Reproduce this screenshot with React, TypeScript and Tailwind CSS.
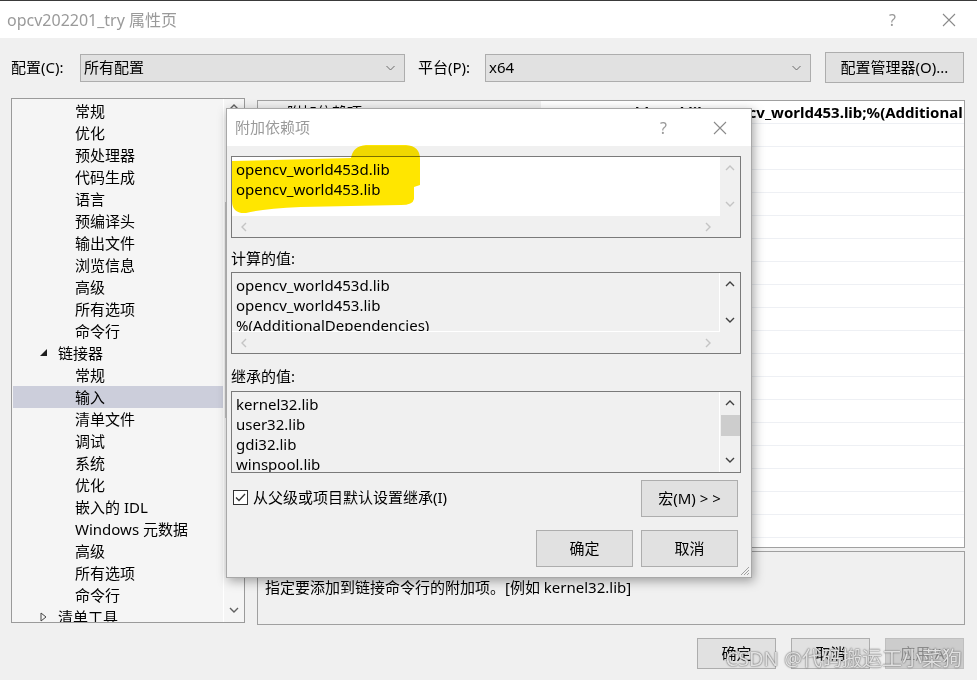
import React from "react";

const font = "font-['Noto_Sans','Noto_Sans_CJK_SC',sans-serif]";

type Dir = "up" | "down" | "left" | "right";

function Chevron({ dir, color = "#606060" }: { dir: Dir; color?: string }) {
  const vertical = dir === "up" || dir === "down";
  const pts = {
    up: "1,6 5,2 9,6",
    down: "1,2 5,6 9,2",
    left: "6,1 2,5 6,9",
    right: "2,1 6,5 2,9",
  }[dir];
  return (
    <svg
      width={vertical ? 10 : 8}
      height={vertical ? 8 : 10}
      viewBox={vertical ? "0 0 10 8" : "0 0 8 10"}
    >
      <polyline points={pts} fill="none" stroke={color} strokeWidth="1.4" />
    </svg>
  );
}

const light = "#c4c4c4";

interface EditBoxProps {
  lines: string[];
  white?: boolean;
  vColor: string;
  hScroll?: boolean;
  thumb?: boolean;
}

function EditBox(props: EditBoxProps) {
  const { lines, white = false, vColor, hScroll = true, thumb = false } = props;
  return (
    <div className="flex flex-col h-[82px] border border-[#7a7a7a] bg-[#f0f0f0]">
      <div className="flex flex-1 min-h-0">
        <div
          className={
            white
              ? "flex-1 overflow-hidden bg-white px-[4px] pt-[2px] text-[15px] leading-[20px]"
              : hScroll
              ? "flex-1 overflow-hidden border-r border-b border-white px-[4px] pt-[2px] text-[15px] leading-[20px]"
              : "flex-1 overflow-hidden border-r border-white px-[4px] pt-[2px] text-[15px] leading-[20px]"
          }
        >
          {lines.map((l) => (
            <div key={l} className="whitespace-nowrap">
              {l}
            </div>
          ))}
        </div>
        <div className="w-[20px] flex flex-col items-center">
          <div className="h-[22px] flex items-center justify-center">
            <Chevron dir="up" color={vColor} />
          </div>
          {thumb && <div className="mt-[1px] h-[21px] w-[19px] bg-[#cdcdcd]" />}
          <div className="flex-1" />
          <div className="h-[24px] flex items-center justify-center">
            <Chevron dir="down" color={vColor} />
          </div>
        </div>
      </div>
      {hScroll && (
        <div className="h-[21px] flex">
          <div className="flex-1 flex items-center justify-between pl-[8px] pr-[8px]">
            <Chevron dir="left" color={light} />
            <Chevron dir="right" color={light} />
          </div>
          <div className="w-[20px]" />
        </div>
      )}
    </div>
  );
}

interface TreeItem {
  label: string;
  indent: "child" | "parent";
  icon?: "open" | "closed";
  selected?: boolean;
}

const treeItems: TreeItem[] = [
  { label: "常规", indent: "child" },
  { label: "优化", indent: "child" },
  { label: "预处理器", indent: "child" },
  { label: "代码生成", indent: "child" },
  { label: "语言", indent: "child" },
  { label: "预编译头", indent: "child" },
  { label: "输出文件", indent: "child" },
  { label: "浏览信息", indent: "child" },
  { label: "高级", indent: "child" },
  { label: "所有选项", indent: "child" },
  { label: "命令行", indent: "child" },
  { label: "链接器", indent: "parent", icon: "open" },
  { label: "常规", indent: "child" },
  { label: "输入", indent: "child", selected: true },
  { label: "清单文件", indent: "child" },
  { label: "调试", indent: "child" },
  { label: "系统", indent: "child" },
  { label: "优化", indent: "child" },
  { label: "嵌入的 IDL", indent: "child" },
  { label: "Windows 元数据", indent: "child" },
  { label: "高级", indent: "child" },
  { label: "所有选项", indent: "child" },
  { label: "命令行", indent: "child" },
  { label: "清单工具", indent: "parent", icon: "closed" },
];

function Button({ label, disabled = false, w = "w-[79px]", h = "h-[31px]" }: { label: string; disabled?: boolean; w?: string; h?: string }) {
  return (
    <div
      className={
        disabled
          ? `${w} ${h} flex items-center justify-center border border-[#bfbfbf] bg-[#cccccc] text-[15px] text-[#8a8a8a]`
          : `${w} ${h} flex items-center justify-center border border-[#adadad] bg-[#e1e1e1] text-[15px] text-black`
      }
    >
      {label}
    </div>
  );
}

function Combo({ text, w }: { text: string; w: string }) {
  return (
    <div className={`${w} h-[28px] flex items-center justify-between border border-[#adadad] bg-[#e1e1e1] pl-[3px] pr-[9px] text-[15px]`}>
      <span>{text}</span>
      <svg width="9" height="6" viewBox="0 0 9 6">
        <polyline points="0.5,1 4.5,5 8.5,1" fill="none" stroke="#6a6a6a" strokeWidth="1" />
      </svg>
    </div>
  );
}

function CloseX({ color }: { color: string }) {
  return (
    <svg width="14" height="14" viewBox="0 0 14 14">
      <path d="M1 1 L13 13 M13 1 L1 13" stroke={color} strokeWidth="1.1" />
    </svg>
  );
}

export default function App() {
  return (
    <div className={`${font} relative w-[977px] h-[680px] overflow-hidden bg-[#f0f0f0] text-black`}>
      <div className="h-px bg-[#3a3a3a]" />
      {/* Window title */}
      <div className="h-[37px] bg-white flex items-center pl-[7px]">
        <span className="text-[16px] text-[#9a9a9a]">opcv202201_try 属性页</span>
        <div className="flex-1" />
        <span className="text-[16px] text-[#9a9a9a] mr-[46px]">?</span>
        <div className="mr-[21px]">
          <CloseX color="#8a8a8a" />
        </div>
      </div>
      {/* Config row */}
      <div className="mt-[14px] h-[31px] flex items-center pl-[11px] text-[15px]">
        <span className="w-[69px]">配置(C):</span>
        <Combo text="所有配置" w="w-[325px]" />
        <span className="ml-[13px] w-[67px]">平台(P):</span>
        <Combo text="x64" w="w-[326px]" />
        <div className="ml-[14px]">
          <Button label="配置管理器(O)..." w="w-[139px]" h="h-[31px]" />
        </div>
      </div>
      {/* Content */}
      <div className="mt-[15px] flex pl-[11px] pr-[12px] gap-[12px] text-[15px]">
        {/* Tree */}
        <div className="w-[234px] shrink-0 h-[525px] border border-[#9a9a9a] bg-[#f5f5f5] flex">
          <div className="flex-1 overflow-hidden pt-[1px] pl-[1px]">
            {treeItems.map((it, i) => (
              <div
                key={i}
                className={
                  it.selected
                    ? "h-[22px] flex items-center bg-[#cccedb] whitespace-nowrap"
                    : "h-[22px] flex items-center whitespace-nowrap"
                }
              >
                {it.indent === "child" ? (
                  <span className="pl-[62px]">{it.label}</span>
                ) : (
                  <>
                    <span className="w-[45px] pl-[27px] flex items-center">
                      {it.icon === "open" ? (
                        <svg width="8" height="8" viewBox="0 0 8 8">
                          <polygon points="7,0 7,7 0,7" fill="#1e1e1e" />
                        </svg>
                      ) : (
                        <svg width="8" height="10" viewBox="0 0 8 10">
                          <polygon points="1,1 6,5 1,9" fill="none" stroke="#444444" strokeWidth="1" />
                        </svg>
                      )}
                    </span>
                    <span>{it.label}</span>
                  </>
                )}
              </div>
            ))}
          </div>
          <div className="w-[21px] flex flex-col items-center border-l border-white">
            <div className="h-[12px] flex items-end">
              <Chevron dir="up" color="#606060" />
            </div>
            <div className="mt-[91px] h-[216px] w-[19px] bg-[#c2c2c2]" />
            <div className="flex-1" />
            <div className="h-[24px] flex items-center">
              <Chevron dir="down" color="#606060" />
            </div>
          </div>
        </div>
        {/* Right column */}
        <div className="flex-1 min-w-0 flex flex-col mt-[2px]">
          <div className="h-[448px] border border-[#a0a0a0] bg-white overflow-hidden">
            {Array.from({ length: 20 }).map((_, i) => (
              <div key={i} className="h-[23px] flex border-b border-[#eef0f4]">
                {i === 0 ? (
                  <>
                    <div className="w-[283px] shrink-0 bg-[#f0f0f0] pl-[29px] leading-[22px] whitespace-nowrap">附加依赖项</div>
                    <div className="flex-1 min-w-0 overflow-hidden pl-[5px] leading-[22px] font-bold whitespace-nowrap">
                      opencv_world453d.lib;opencv_world453.lib;%(AdditionalDependencies)
                    </div>
                  </>
                ) : null}
              </div>
            ))}
          </div>
          <div className="mt-[3px] h-[74px] border border-[#a0a0a0] px-[7px] pt-[2px] leading-[22px]">
            <div className="font-bold">附加依赖项</div>
            <div>指定要添加到链接命令行的附加项。[例如 kernel32.lib]</div>
          </div>
        </div>
      </div>
      {/* Bottom buttons */}
      <div className="mt-[13px] flex justify-end gap-[15px] pr-[13px]">
        <Button label="确定" />
        <Button label="取消" />
        <Button label="应用(A)" disabled />
      </div>

      {/* Dialog window */}
      <div className="absolute left-[226px] top-[108px] w-[526px] h-[470px] border border-[#a8a8a8] bg-[#f0f0f0] shadow-[2px_3px_10px_rgba(0,0,0,0.35)] flex flex-col text-[15px]">
        <div className="h-[37px] bg-white flex items-center pl-[8px] shrink-0">
          <span className="text-[#9a9a9a]">附加依赖项</span>
          <div className="flex-1" />
          <span className="text-[16px] text-[#9a9a9a] mr-[46px]">?</span>
          <div className="mr-[24px]">
            <CloseX color="#8a8a8a" />
          </div>
        </div>
        <div className="flex flex-col pl-[4px] pr-[10px]">
          <div className="mt-[10px]">
            <EditBox lines={["opencv_world453d.lib", "opencv_world453.lib"]} white vColor={light} />
          </div>
          <div className="h-[34px] pt-[10px] leading-[20px]">计算的值:</div>
          <EditBox
            lines={["opencv_world453d.lib", "opencv_world453.lib", "%(AdditionalDependencies)"]}
            vColor="#404040"
          />
          <div className="h-[37px] pt-[12px] leading-[20px]">继承的值:</div>
          <EditBox
            lines={["kernel32.lib", "user32.lib", "gdi32.lib", "winspool.lib", "comdlg32.lib"]}
            vColor="#404040"
            hScroll={false}
            thumb
          />
          <div className="mt-[7px] flex items-start justify-between pr-[3px]">
            <div className="mt-[7px] flex items-center pl-[2px]">
              <div className="w-[15px] h-[15px] border border-[#333333] bg-white flex items-center justify-center">
                <svg width="11" height="9" viewBox="0 0 11 9">
                  <polyline points="1,4.5 4,7.5 10,1" fill="none" stroke="#333333" strokeWidth="1.3" />
                </svg>
              </div>
              <span className="ml-[5px] leading-[20px]">从父级或项目默认设置继承(I)</span>
            </div>
            <Button label="宏(M) > >" w="w-[97px]" h="h-[37px]" />
          </div>
          <div className="mt-[13px] flex justify-end gap-[8px] pr-[3px]">
            <Button label="确定" w="w-[97px]" h="h-[37px]" />
            <Button label="取消" w="w-[97px]" h="h-[37px]" />
          </div>
        </div>
        {/* size grip */}
        <svg className="absolute right-[1px] bottom-[1px]" width="11" height="11" viewBox="0 0 11 11">
          <path d="M10 2 L2 10 M10 5 L5 10 M10 8 L8 10" stroke="#a0a0a0" strokeWidth="1" />
        </svg>
        {/* highlighter mark */}
        <svg
          className="absolute left-0 top-0 pointer-events-none mix-blend-multiply"
          width="526"
          height="120"
          viewBox="0 0 526 120"
        >
          <path
            d="M5,52 L124,49 Q126,37 139,36 L179,36 Q193,37 193,50 L193,76 L187,78 L187,90 Q186,96 174,96 L74,98 Q34,100 19,104 Q5,105 5,92 Z"
            fill="#ffe600"
          />
        </svg>
      </div>

      {/* Watermark */}
      <div className="absolute right-[15px] bottom-[6px] text-[20px] text-[#f4f4f4]/85 [text-shadow:0_0_2px_#6a6a6a,0_0_1px_#6a6a6a] whitespace-nowrap">
        CSDN @代码搬运工小菜狗
      </div>
    </div>
  );
}
